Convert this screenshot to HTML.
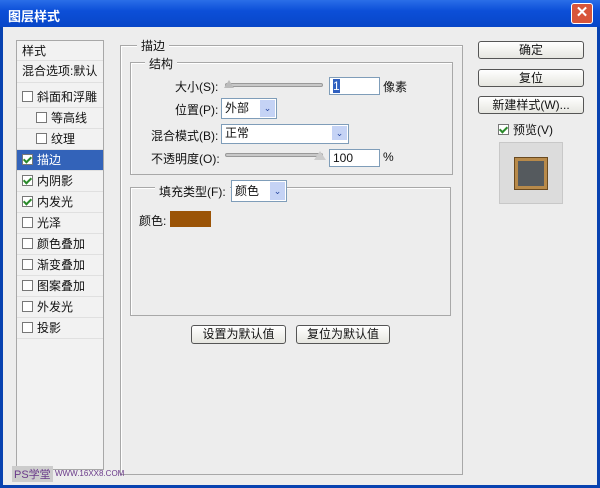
<!DOCTYPE html><html><head><style>
*{margin:0;padding:0;box-sizing:border-box}
body{width:600px;height:488px;overflow:hidden;background:#0842b0;font-family:"Liberation Sans","Noto Sans CJK SC",sans-serif;font-size:12px;color:#111;position:relative}
.a{position:absolute}
.win{left:3px;top:27px;width:594px;height:458px;background:#ededed}
.title{left:0;top:0;width:600px;height:27px;background:linear-gradient(#2a6ee8,#0c4fd8 40%,#0846c8);color:#fff;font-weight:bold;font-size:13px;padding:6px 0 0 8px}
.close{left:571px;top:3px;width:22px;height:21px;background:#d8553a;border:1px solid #fff;border-radius:3px;color:#fff;text-align:center;font-weight:bold;font-size:15px;line-height:18px}
.list{left:16px;top:40px;width:88px;height:430px;background:#f2f2f2;border:1px solid #a8a8a8}
.row{position:absolute;left:0;width:86px;height:21px;line-height:21px;padding-left:5px;border-bottom:1px solid #e0e0e0;font-size:12px}
.cb{display:inline-block;width:11px;height:11px;border:1px solid #777;background:#fff;vertical-align:-1px;margin-right:4px;position:relative}
.cb.c::after{content:"";position:absolute;left:2px;top:0px;width:3px;height:6px;border:solid #2a8a2a;border-width:0 2px 2px 0;transform:rotate(45deg)}
.box{border:1px solid #a8a8a8;box-shadow:1px 1px 0 #fff inset}
.lbl{background:#ededed;padding:0 4px;font-size:12px}
.inp{background:#fff;border:1px solid #7f9db9;height:18px;line-height:16px;padding-left:3px;font-size:12px}
.dd{position:absolute;right:1px;top:1px;width:15px;height:14px;background:#c5d3f5;color:#2747a0;font-size:9px;text-align:center;line-height:14px}
.btn{background:linear-gradient(#fff,#e6e6e0);border:1px solid #555;border-radius:3px;text-align:center;font-size:12px;line-height:16px}
.track{height:4px;background:#c8c8c8;border:1px solid #999;border-radius:2px}
</style></head><body>
<div class="a title">图层样式</div>
<div class="a close">✕</div>
<div class="a win"></div>
<div class="a list">
<div class="row" style="top:0;height:20px">样式</div>
<div class="row" style="top:20px;height:22px">混合选项:默认</div>
<div class="row" style="top:46px"><span class="cb"></span>斜面和浮雕</div>
<div class="row" style="top:67px;padding-left:19px"><span class="cb"></span>等高线</div>
<div class="row" style="top:88px;padding-left:19px"><span class="cb"></span>纹理</div>
<div class="row" style="top:109px;background:#3363b9;color:#fff"><span class="cb c"></span>描边</div>
<div class="row" style="top:130px"><span class="cb c"></span>内阴影</div>
<div class="row" style="top:151px"><span class="cb c"></span>内发光</div>
<div class="row" style="top:172px"><span class="cb"></span>光泽</div>
<div class="row" style="top:193px"><span class="cb"></span>颜色叠加</div>
<div class="row" style="top:214px"><span class="cb"></span>渐变叠加</div>
<div class="row" style="top:235px"><span class="cb"></span>图案叠加</div>
<div class="row" style="top:256px"><span class="cb"></span>外发光</div>
<div class="row" style="top:277px"><span class="cb"></span>投影</div>
</div>
<div class="a box" style="left:120px;top:45px;width:343px;height:430px"></div>
<div class="a lbl" style="left:137px;top:37px">描边</div>
<div class="a box" style="left:130px;top:62px;width:323px;height:113px"></div>
<div class="a lbl" style="left:145px;top:55px">结构</div>
<div class="a" style="left:175px;top:78px">大小(S):</div>
<div class="a track" style="left:225px;top:83px;width:98px"></div>
<div class="a" style="left:224px;top:80px;width:0;height:0;border-left:5px solid transparent;border-right:5px solid transparent;border-bottom:8px solid #bbb"></div>
<div class="a inp" style="left:329px;top:77px;width:51px"><span style="background:#3060c0;color:#fff">1</span></div>
<div class="a" style="left:383px;top:78px">像素</div>
<div class="a" style="left:175px;top:101px">位置(P):</div>
<div class="a inp" style="left:221px;top:98px;width:56px;height:21px;line-height:19px">外部<span class="dd" style="height:17px;line-height:17px">⌄</span></div>
<div class="a" style="left:151px;top:127px">混合模式(B):</div>
<div class="a inp" style="left:221px;top:124px;width:128px;height:20px">正常<span class="dd">⌄</span></div>
<div class="a" style="left:151px;top:150px">不透明度(O):</div>
<div class="a track" style="left:225px;top:153px;width:98px"></div>
<div class="a" style="left:314px;top:151px;width:0;height:0;border-left:6px solid transparent;border-right:6px solid transparent;border-bottom:9px solid #ccc"></div>
<div class="a inp" style="left:329px;top:149px;width:51px">100</div>
<div class="a" style="left:383px;top:150px">%</div>
<div class="a box" style="left:130px;top:187px;width:321px;height:129px"></div>
<div class="a lbl" style="left:155px;top:183px">填充类型(F):</div>
<div class="a inp" style="left:231px;top:180px;width:56px;height:22px;line-height:20px">颜色<span class="dd" style="height:18px;line-height:18px">⌄</span></div>
<div class="a" style="left:139px;top:212px">颜色:</div>
<div class="a" style="left:170px;top:211px;width:41px;height:16px;background:#9b5407"></div>
<div class="a btn" style="left:191px;top:325px;width:95px;height:19px">设置为默认值</div>
<div class="a btn" style="left:296px;top:325px;width:94px;height:19px">复位为默认值</div>
<div class="a btn" style="left:478px;top:41px;width:106px;height:18px">确定</div>
<div class="a btn" style="left:478px;top:69px;width:106px;height:18px">复位</div>
<div class="a btn" style="left:478px;top:96px;width:106px;height:18px">新建样式(W)...</div>
<div class="a" style="left:498px;top:121px"><span class="cb c"></span>预览(V)</div>
<div class="a" style="left:499px;top:142px;width:64px;height:62px;background:#dcdcdc;border:1px solid #c8c8c8"></div>
<div class="a" style="left:515px;top:158px;width:32px;height:31px;background:#555a5e;border:3px solid #b88a4a;box-shadow:0 0 0 1px #6a4a20"></div>
<div class="a" style="left:12px;top:466px;font-size:11px;color:#6a3a8a;background:#ccc;padding:0 2px">PS学堂</div>
<div class="a" style="left:55px;top:469px;font-size:8px;color:#6a3a8a">WWW.16XX8.COM</div>
</body></html>
